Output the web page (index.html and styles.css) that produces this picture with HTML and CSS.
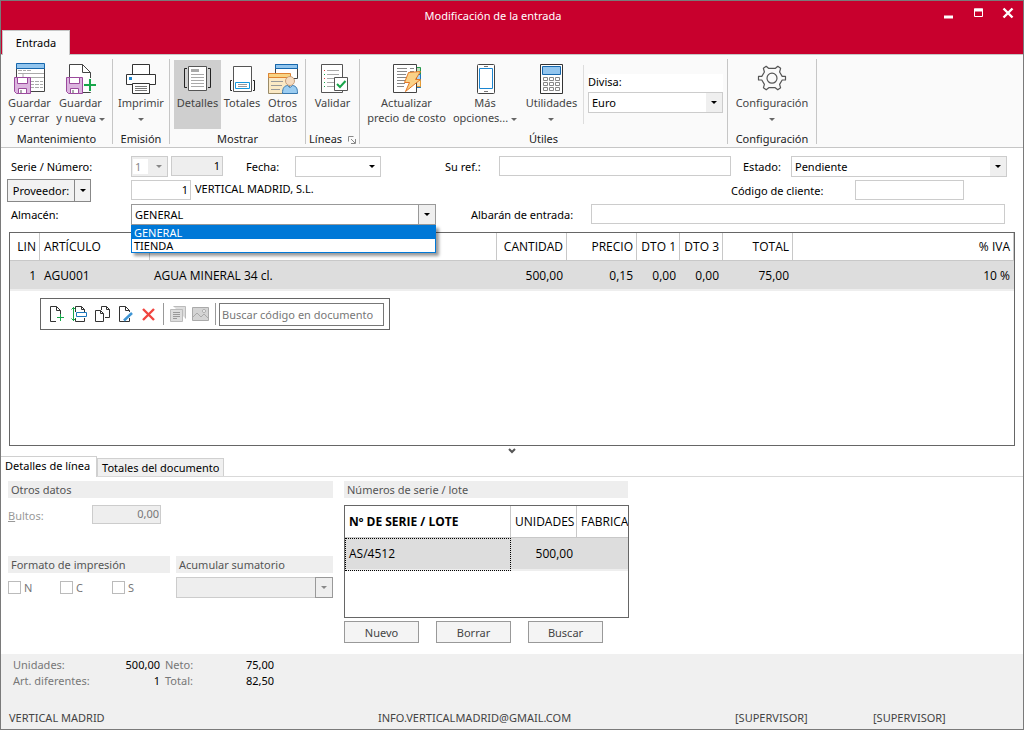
FILE: index.html
```html
<!DOCTYPE html>
<html lang="es">
<head>
<meta charset="utf-8">
<title>Modificación de la entrada</title>
<link rel="stylesheet" href="styles.css">
</head>
<body>
<div class="window">
  <header class="titlebar">
    <div class="title-row">
      <h1 class="title">Modificación de la entrada</h1>
      <div class="controls">
        <button class="control" type="button" aria-label="Minimizar"><svg width="12" height="12"><path d="M2 10h9" stroke="#fff" stroke-width="3"/></svg></button>
        <button class="control" type="button" aria-label="Maximizar"><svg width="12" height="12"><path d="M2.500 2h8v7.500h-8z" fill="none" stroke="#fff"/><path d="M2 3h9" stroke="#fff" stroke-width="3"/></svg></button>
        <button class="control" type="button" aria-label="Cerrar"><svg width="12" height="12"><path d="M1.500 1.500l9 9M10.500 1.500l-9 9" stroke="#fff" stroke-width="2.400"/></svg></button>
      </div>
    </div>
    <div class="ribbon-tabs"><button class="ribbon-tab" type="button">Entrada</button></div>
  </header>

  <nav class="ribbon">
    <section class="group g-save">
      <div class="group-items">
        <button class="tool" type="button">
          <svg width="32" height="32" viewBox="0 0 32 32"><path d="M2.500 6v23.500h28V6" fill="#fff" stroke="#444"/><path d="M2.500 1.500h28v5h-28z" fill="#92c5ee" stroke="#1667ad"/><path d="M4 8.500h4m1 0h3m1 0h4M4 11.500h26M9 11v4.500h21M15 19.500h14M15 22.500h14M15 25.500h14" stroke="#aaa" fill="none"/><path d="M15 19.500h14M15 22.500h14M15 25.500h14" stroke="#fff" stroke-dasharray="1 4"/><path d="M.5 15.500h16v16h-14l-2-2z" fill="#dcb5df" stroke="#9b4a9d"/><path d="M3.500 15.500h10v6h-10z" fill="#fff" stroke="#9b4a9d"/><path d="M4.500 26.500h8v5h-8z" fill="#fff" stroke="#9b4a9d"/><path d="M7 28v3" stroke="#555"/></svg>
          <span>Guardar<br>y cerrar</span>
        </button>
        <button class="tool" type="button">
          <svg width="32" height="32" viewBox="0 0 32 32"><path d="M4.500 2.500h13l8 8v20h-21z" fill="#fff" stroke="#444"/><path d="M17.500 2.500v8h8" fill="none" stroke="#444"/><path d="M1.500 15.500h16v16h-14l-2-2z" fill="#dcb5df" stroke="#9b4a9d"/><path d="M4.500 15.500h10v6h-10z" fill="#fff" stroke="#9b4a9d"/><path d="M5.500 26.500h8v5h-8z" fill="#fff" stroke="#9b4a9d"/><path d="M8 28v3" stroke="#555"/><path d="M25 16v14M18 23h14" stroke="#fafafa" stroke-width="4"/><path d="M25 17v12M19 23h12" stroke="#18a64a" stroke-width="2"/></svg>
          <span>Guardar<br>y nueva <i class="caret"></i></span>
        </button>
      </div>
      <h2 class="group-name">Mantenimiento</h2>
    </section>
    <section class="group g-print">
      <div class="group-items">
        <button class="tool" type="button">
          <svg width="32" height="32" viewBox="0 0 32 32" fill="#fff" stroke="#333"><path d="M7.500 12.500v-10h17v10M1.500 12.500h29v10h-29z"/><path d="M7.500 21.500h17v10h-17z"/><path d="M10 24.500h12M10 26.500h12M10 28.500h12" stroke="#777"/><path d="M4 15h3v3h-3z" fill="#1c86d1" stroke="none"/></svg>
          <span>Imprimir<br><i class="caret"></i></span>
        </button>
      </div>
      <h2 class="group-name">Emisión</h2>
    </section>
    <section class="group g-show">
      <div class="group-items">
        <button class="tool active" type="button" aria-pressed="true">
          <svg width="32" height="32" viewBox="0 0 32 32" fill="none" stroke="#555"><path d="M6.500 4.500h18v24h-18z" fill="#fff"/><path d="M9 7h8v3H9z" fill="#aaa" stroke="none"/><path d="M9 12.500h13M9 15.500h13M9 18.500h13M9 21.500h13M9 24.500h13" stroke="#aaa"/><path d="M5 6.500h-2.500v19H5M26 6.500h2.500v19H26" stroke="#222"/></svg>
          <span>Detalles</span>
        </button>
        <button class="tool t-totals" type="button">
          <svg width="32" height="32" viewBox="0 0 32 32" fill="none" stroke="#555"><path d="M7.500 4.500h18v25h-18z" fill="#fff"/><path d="M9.500 20.500h14v6h-14z" stroke="#1597dd"/><path d="M12 22.500h9M12 24.500h9" stroke="#999"/><path d="M6 18.500H4.500v10H6M27 18.500h1.500v10H27" stroke="#222"/></svg>
          <span>Totales</span>
        </button>
        <button class="tool t-other" type="button">
          <svg width="32" height="32" viewBox="0 0 32 32"><path d="M8.500 2.500h22v14h-22z" fill="#fff" stroke="#444"/><path d="M8.500 2.500h22v4h-22z" fill="#92c5ee" stroke="#1667ad"/><path d="M1.500 11.500h21v20h-21z" fill="#fbe9c4" stroke="#9a8b68"/><path d="M1.500 11.500h22v4h-22z" fill="#f8d383" stroke="#df8432"/><path d="M4 19.500h12M4 23.500h11M4 27.500h9" stroke="#999"/><circle cx="23" cy="19" r="4.500" fill="#f5dcc1" stroke="#c8a07c"/><path d="M15.500 31.500c0-6 2-7.500 5-8l2.500 2 2.500-2c4 .5 5 3 5 8z" fill="#9ccdf1" stroke="#3878ae"/></svg>
          <span>Otros<br>datos</span>
        </button>
      </div>
      <h2 class="group-name">Mostrar</h2>
    </section>
    <section class="group g-lines">
      <div class="group-items">
        <button class="tool" type="button">
          <svg width="32" height="32" viewBox="0 0 32 32" fill="none"><path d="M4.500 2.500h21v28h-21z" fill="#fff" stroke="#555"/><path d="M10 8.500h12M10 12.500h12M10 16.500h8M10 20.500h7M10 24.500h7" stroke="#aaa"/><path d="M7.500 8v18" stroke="#18a64a" stroke-dasharray="1 3"/><path d="M7.500 8v1M7.500 16v1" stroke="#d44"/><path d="M17.500 15.500h13v13h-13z" fill="#fff" stroke="#555"/><path d="M20 22l3 3 5.500-6" stroke="#18a64a" stroke-width="2"/></svg>
          <span>Validar</span>
        </button>
      </div>
      <h2 class="group-name">Líneas <button class="launcher" type="button" aria-label="Más opciones de líneas"><svg width="8" height="8" fill="none" stroke="#888"><path d="M.5 5.500v-5h5M3 3l4 4M7.500 3v4.500H3"/></svg></button></h2>
    </section>
    <section class="group g-utils">
      <div class="group-items">
        <button class="tool t-wide" type="button">
          <svg width="32" height="32" viewBox="0 0 32 32"><path d="M20 5.500h9.500v20H20z" fill="#b9e0b8" stroke="#23974a"/><path d="M20 12.500h9.500v13H20z" fill="#a9d1f2" stroke="#1c76bd"/><path d="M20 18.500h9.500v6H20z" fill="#fbe3b0" stroke="#e69a35"/><path d="M2.500 2.500h23v28h-23z" fill="#fff" stroke="#444"/><path d="M6 6.500h10M6 9.500h10M6 12.500h9M6 15.500h9M6 18.500h8M6 21.500h8M6 24.500h7M19 6.500h4M19 9.500h4" stroke="#888"/><path d="M17.500 10.500l12-1-5 8h5l-15 12 4-9h-5z" fill="#fad187" stroke="#e47825"/></svg>
          <span>Actualizar<br>precio de costo</span>
        </button>
        <button class="tool t-more" type="button">
          <svg width="32" height="32" viewBox="0 0 32 32" fill="#fff"><rect x="8.500" y="2.500" width="17" height="29" rx="1" stroke="#444"/><path d="M10.500 6.500h13v20h-13z" stroke="#1c86d1"/><path d="M15 4.500h4M15 29.500h4" stroke="#777"/></svg>
          <span>Más<br>opciones... <i class="caret"></i></span>
        </button>
        <button class="tool t-tools" type="button">
          <svg width="32" height="32" viewBox="0 0 32 32" fill="#fff"><path d="M4.500 2.500h22v29h-22z" stroke="#333"/><path d="M6.500 4.500h18v8h-18z" fill="#92c5ee" stroke="#1667ad"/><path d="M7.500 15.500h4v3h-4zM13.500 15.500h4v3h-4zM19.500 15.500h4v3h-4zM7.500 20.500h4v3h-4zM13.500 20.500h4v3h-4zM19.500 20.500h4v3h-4zM7.500 25.500h4v3h-4zM13.500 25.500h4v3h-4zM19.500 25.500h4v3h-4z" stroke="#888"/></svg>
          <span>Utilidades<br><i class="caret"></i></span>
        </button>
        <div class="currency">
          <label for="divisa">Divisa:</label>
          <span class="combo shaded"><select id="divisa"><option>Euro</option></select></span>
        </div>
      </div>
      <h2 class="group-name">Útiles</h2>
    </section>
    <section class="group g-config">
      <div class="group-items">
        <button class="tool" type="button">
          <svg width="32" height="32" viewBox="0 0 32 32" fill="none" stroke="#555" stroke-width="1.200"><path d="M12.500 6.300L10.200 4.300l-2.800 2 1 3.700-2.600 4.400H2.500v3.600h3.300l2.600 4.400-1 3.400 2.800 2 2.600-2.100h6.400l2.600 2.100 2.800-2-1-3.400 2.600-4.400h3.300v-3.600h-3.300L23.600 10l1-3.700-2.800-2-2.300 2z" stroke-linejoin="round"/><circle cx="16" cy="16.200" r="5"/></svg>
          <span>Configuración<br><i class="caret"></i></span>
        </button>
      </div>
      <h2 class="group-name">Configuración</h2>
    </section>
  </nav>

  <main>
    <form class="form">
      <div class="row">
        <label class="lead" for="serie">Serie / Número:</label>
        <span class="combo off w-serie"><select id="serie" disabled><option>1</option></select></span>
        <input class="field num off w-numero" aria-label="Número" value="1" readonly>
        <label class="l-fecha" for="fecha">Fecha:</label>
        <span class="combo w-fecha"><select id="fecha"><option></option></select></span>
        <label class="l-ref" for="ref">Su ref.:</label>
        <input class="field w-ref" id="ref">
        <label class="l-estado" for="estado">Estado:</label>
        <span class="combo shaded grow"><select id="estado"><option>Pendiente</option></select></span>
      </div>
      <div class="row">
        <div class="lead-split"><div class="split"><button type="button">Proveedor:</button><button class="split-arrow" type="button" aria-label="Elegir"></button></div></div>
        <input class="field num w-prov" aria-label="Proveedor" value="1">
        <span class="prov-name">VERTICAL MADRID, S.L.</span>
        <label class="l-cliente" for="cliente">Código de cliente:</label>
        <input class="field w-cliente" id="cliente">
      </div>
      <div class="row">
        <label class="lead" for="almacen">Almacén:</label>
        <span class="combo open w-almacen"><select id="almacen"><option>GENERAL</option><option>TIENDA</option></select>
          <ul class="options"><li class="chosen">GENERAL</li><li>TIENDA</li></ul>
        </span>
        <label class="l-albaran" for="albaran">Albarán de entrada:</label>
        <input class="field grow w-albaran" id="albaran">
      </div>
    </form>

    <div class="lines">
      <table class="grid">
        <colgroup><col class="c-lin"><col class="c-art"><col class="c-desc"><col class="c-num"><col class="c-num"><col class="c-dto"><col class="c-dto"><col class="c-num"><col></colgroup>
        <thead><tr><th class="r">LIN</th><th>ARTÍCULO</th><th></th><th class="r">CANTIDAD</th><th class="r">PRECIO</th><th class="r">DTO 1</th><th class="r">DTO 3</th><th class="r">TOTAL</th><th class="r">% IVA</th></tr></thead>
        <tbody><tr><td class="r">1</td><td>AGU001</td><td>AGUA MINERAL 34 cl.</td><td class="r">500,00</td><td class="r">0,15</td><td class="r">0,00</td><td class="r">0,00</td><td class="r">75,00</td><td class="r">10 %</td></tr></tbody>
      </table>
      <div class="toolbar">
        <button type="button" aria-label="Nueva línea"><svg width="17" height="18" fill="none" stroke="#333"><path d="M8 16.500H2.500v-15h6l4 4V9M8.500 1.500v4h4"/><path d="M12.500 9v7M9 12.500h7" stroke="#18a64a"/></svg></button>
        <button type="button" aria-label="Insertar línea"><svg width="17" height="18" fill="none" stroke="#333"><path d="M4.500 7V1.500h6l3 3V7M10.500 1.500v3h3M4.500 13v3.500h9V13"/><path d="M5.500 7.500h10v4h-10z" stroke="#1c76bd"/><path d="M2.500 2v14M.5 4.500l2-2 2 2M.5 13.500l2 2 2-2" stroke="#18a64a"/></svg></button>
        <button type="button" aria-label="Duplicar línea"><svg width="17" height="18" fill="none" stroke="#333"><path d="M7.500 5V1.500h5l3 3v8H11M12.500 1.500v3h3"/><path d="M1.500 5.500h5l3 3v8h-8zM6.500 5.500v3h3"/></svg></button>
        <button type="button" aria-label="Modificar línea"><svg width="17" height="18" fill="none" stroke="#333"><path d="M12.500 13v3.500h-10v-15h6l4 4V7M8.500 1.500v4h4"/><path d="M7 15.500l8-7.500" stroke="#3f95d4" stroke-width="2.500"/></svg></button>
        <button type="button" aria-label="Borrar línea"><svg width="17" height="18"><path d="M3 4l11 11M14 4L3 15" stroke="#f04540" stroke-width="2.400"/></svg></button>
        <i class="bar"></i>
        <button type="button" aria-label="Notas" disabled><svg width="17" height="18" fill="#ddd" stroke="#bbb"><path d="M4.500 1.500h12v12"/><path d="M1.500 4.500h12v12h-12z"/><path d="M4 7.500h7M4 9.500h7M4 11.500h7M4 13.500h4" stroke="#999"/></svg></button>
        <button type="button" aria-label="Imagen" disabled><svg width="17" height="18" fill="#d4d4d4" stroke="#aaa"><path d="M.5 2.500h16v13H.5z"/><path d="M1 12l4-4 4 4 3-3 4 4" fill="none"/><circle cx="12" cy="6" r="1.500" fill="#fff"/></svg></button>
        <i class="bar"></i>
        <input class="search" aria-label="Buscar" placeholder="Buscar código en documento">
      </div>
    </div>
    <button class="collapse" type="button" aria-label="Plegar detalles"><svg width="8" height="6"><path d="M1 1l3 3 3-3" fill="none" stroke="#555" stroke-width="2"/></svg></button>

    <div class="tabs" role="tablist">
      <button class="tab on" type="button" role="tab" aria-selected="true">Detalles de línea</button>
      <button class="tab" type="button" role="tab" aria-selected="false">Totales del documento</button>
    </div>

    <div class="details">
      <div class="left">
        <h3 class="strip">Otros datos</h3>
        <div class="bultos"><label for="bultos"><u>B</u>ultos:</label><input class="field num" id="bultos" value="0,00" disabled></div>
        <div class="pair">
          <div class="format">
            <h3 class="strip">Formato de impresión</h3>
            <div class="checks">
              <label><input type="checkbox" disabled>N</label>
              <label><input type="checkbox" disabled>C</label>
              <label><input type="checkbox" disabled>S</label>
            </div>
          </div>
          <div class="sum">
            <h3 class="strip">Acumular sumatorio</h3>
            <span class="combo off boxed"><select aria-label="Acumular sumatorio" disabled><option></option></select></span>
          </div>
        </div>
      </div>
      <div class="right">
        <h3 class="strip">Números de serie / lote</h3>
        <div class="lots">
          <table class="grid lot-grid">
            <colgroup><col class="c-lot"><col class="c-units"><col></colgroup>
            <thead><tr><th class="bold">Nº DE SERIE / LOTE</th><th class="r">UNIDADES</th><th>FABRICA</th></tr></thead>
            <tbody><tr><td class="focus">AS/4512</td><td class="r">500,00</td><td></td></tr></tbody>
          </table>
        </div>
        <div class="actions"><button type="button">Nuevo</button><button type="button">Borrar</button><button type="button">Buscar</button></div>
      </div>
    </div>
  </main>

  <footer class="footer">
    <dl class="totals"><dt>Unidades:</dt><dd>500,00</dd><dt>Neto:</dt><dd>75,00</dd><dt>Art. diferentes:</dt><dd>1</dd><dt>Total:</dt><dd>82,50</dd></dl>
    <div class="status"><span>VERTICAL MADRID</span><span>INFO.VERTICALMADRID@GMAIL.COM</span><span>[SUPERVISOR]</span><span>[SUPERVISOR]</span></div>
  </footer>
</div>
</body>
</html>
```

FILE: styles.css
```css
* { box-sizing: border-box; }
body { margin: 0; font: 11px/15px "Noto Sans", "Open Sans", sans-serif; color: #000; }
button, input, select { font: inherit; color: inherit; margin: 0; padding: 0; border-radius: 0; }
button { border: 0; background: none; }
h1, h2, h3, dl, dd, ul { margin: 0; padding: 0; font: inherit; }
svg { display: block; flex: none; }

.window { display: flex; flex-direction: column; min-height: 100vh; border: 1px solid #7a7a7a; background: #fff; }

.titlebar { background: #c8002d; color: #fff; }
.title-row { display: flex; height: 29px; align-items: center; }
.title { flex: 1; padding-left: 43px; text-align: center; }
.controls { display: flex; gap: 18px; padding-right: 9px; padding-bottom: 6px; }
.control { display: block; }
.ribbon-tabs { display: flex; padding-left: 1px; }
.ribbon-tab { height: 25px; width: 68px; margin-bottom: -1px; padding-bottom: 2px; position: relative; background: #fafafa; color: #000; border: 1px solid #c6c6c6; border-bottom: 0; }

.ribbon { display: flex; padding: 4px 0 3px; height: 94px; background: #fafafa; border-top: 1px solid #c6c6c6; border-bottom: 1px solid #c6c6c6; }
.group { display: flex; flex-direction: column; border-right: 1px solid #c6c6c6; }
.group-items { display: flex; flex: 1; justify-content: center; padding-top: 1px; }
.group-name { height: 15px; text-align: center; color: #222; line-height: 20px; }
.g-save { width: 112px; }
.g-print { width: 57px; }
.g-show { width: 136px; }
.g-lines { width: 54px; }
.g-utils { width: 368px; }
.g-config { width: 89px; }
.g-save .group-items, .g-show .group-items, .g-utils .group-items { justify-content: flex-start; padding-left: 3px; }
.tool { display: flex; flex-direction: column; align-items: center; gap: 1px; height: 69px; padding-top: 2px; color: #444; white-space: nowrap; }
.g-save .tool { width: 51px; }
.tool.active { width: 47px; margin-left: 1px; background: #cfcfcf; }
.t-totals { width: 42px; }
.t-other { width: 39px; }
.t-wide { width: 87px; }
.t-more { width: 70px; }
.t-tools { width: 63px; }
.caret { display: inline-block; border: 3px solid transparent; border-top-color: #666; border-bottom: 0; vertical-align: middle; }
.launcher { display: inline-block; vertical-align: middle; margin-left: 3px; }
.currency { display: flex; flex-direction: column; width: 140px; height: 59px; margin-top: 5px; padding: 9px 0 0 4px; border-left: 1px solid #ddd; }
.currency label { height: 18px; background: #fff; }

.combo { position: relative; display: block; height: 21px; }
.combo select { appearance: none; display: block; width: 100%; height: 100%; padding: 0 20px 0 3px; border: 1px solid #ccc; background: #fff; opacity: 1; }
.combo::before { content: ""; position: absolute; right: 1px; top: 1px; bottom: 1px; width: 16px; pointer-events: none; }
.combo::after { content: ""; position: absolute; right: 6px; top: 9px; border: 3px solid transparent; border-top-color: #000; border-bottom: 0; pointer-events: none; }
.shaded::before, .open::before { background: #efefef; }
.off select { background: #eee; color: #888; }
.w-serie select { background: linear-gradient(#fff, #fff) 1px 2px / 15px 15px no-repeat #eee; }
.off::after { border-top-color: #888; }
.open select { border-color: #999; }
.open::before { border-left: 1px solid #999; }
.boxed::before { right: 0; top: 0; bottom: 0; border: 1px solid #999; }
.options { position: absolute; z-index: 1; left: 0; right: 0; top: 21px; list-style: none; background: #fff; border: 1px solid #0078d7; box-shadow: 3px 3px 3px #0006; line-height: 13px; }
.options li { padding-left: 2px; }
.options .chosen { background: #0078d7; color: #fff; }

.form { padding: 6px 16px 6px 10px; }
.row { display: flex; align-items: center; height: 24px; white-space: nowrap; }
.field { height: 20px; padding: 0 3px; border: 1px solid #ccc; background: #fff; }
.num { text-align: right; padding: 0 2px 2px; }
.field.off { background: #eee; }
.grow { flex: 1; min-width: 0; }
.lead, .lead-split { width: 120px; }
.w-serie { width: 37px; margin-right: 3px; }
.w-numero { width: 52px; }
.l-fecha { width: 72px; padding-left: 23px; }
.w-fecha { width: 86px; }
.l-ref { width: 118px; padding-left: 64px; }
.w-ref { width: 232px; }
.l-estado { width: 60px; padding-left: 12px; }
.split { display: flex; width: 84px; height: 23px; margin-left: -4px; border: 1px solid #888; background: #f2f2f2; }
.split button { flex: 1; }
.split .split-arrow { flex: none; width: 16px; border-left: 1px solid #888; }
.split-arrow::before { content: ""; display: block; width: 0; margin: 0 auto; border: 3px solid transparent; border-top-color: #000; border-bottom: 0; }
.w-prov { width: 60px; }
.prov-name { width: 540px; padding: 0 0 3px 4px; }
.l-cliente { width: 124px; }
.w-cliente { width: 109px; }
.w-almacen { width: 305px; }
.l-albaran { width: 155px; padding-left: 35px; }
.w-albaran { margin-right: 2px; }

.lines { height: 214px; margin: 0 8px; border: 1px solid #666; }
.grid { width: 100%; table-layout: fixed; border-collapse: separate; border-spacing: 0; font: 12px/16px "Open Sans", "Noto Sans", sans-serif; white-space: nowrap; }
.grid th { height: 28px; padding: 0 4px; border-right: 1px solid #c8c8c8; border-bottom: 1px solid #c8c8c8; font-weight: 400; text-align: left; }
.grid td { height: 30px; padding: 1px 4px 0; background: #ddd; border-bottom: 2px solid #eee; }
.grid .r { text-align: right; }
.grid th.r { padding-right: 3px; }
.grid .bold { font-weight: 700; }
.c-lin { width: 30px; }
.c-art { width: 110px; }
.c-desc { width: 347px; }
.c-num { width: 70px; }
.c-dto { width: 43px; }

.toolbar { display: flex; align-items: center; gap: 6px; width: max-content; height: 32px; margin: 7px 0 0 30px; padding: 0 5px 0 7px; border: 1px solid #666; }
.bar { width: 1px; height: 22px; margin-right: -1px; background: #999; }
.search { width: 165px; height: 23px; margin-left: -2px; padding: 0 2px; border: 1px solid #777; }
.search::placeholder { color: #777; }
.collapse { display: block; height: 10px; margin: 0 auto; }

.tabs { display: flex; align-items: flex-end; height: 21px; border-bottom: 1px solid #d9d9d9; }
.tab { height: 18px; padding: 0 4px; border: 1px solid #d0d0d0; border-bottom: 0; background: #f0f0f0; }
.tab.on { height: 21px; margin-bottom: -1px; background: #fff; border-left: 0; padding: 0 6px 4px 4px; position: relative; }
.details { display: flex; gap: 11px; padding: 4px 7px 11px; }
.left { width: 325px; color: #777; }
.strip { height: 17px; padding-left: 3px; line-height: 17px; background: #eee; color: #555; }
.bultos { display: flex; height: 19px; margin: 7px 0 32px; color: #999; }
.bultos label { width: 84px; padding-top: 3px; }
.bultos .field { width: 69px; height: 19px; padding-right: 1px; background: #eee; color: #777; }
.pair { display: flex; gap: 6px; }
.format { width: 162px; }
.sum { width: 157px; }
.sum .combo { margin-top: 4px; }
.checks { display: flex; margin-top: 7px; }
.checks label { display: flex; align-items: center; gap: 3px; width: 52px; }
.checks input { appearance: none; width: 13px; height: 13px; border: 1px solid #bbb; background: #fff; }
.right { width: 285px; }
.right .strip { margin-right: 1px; }
.lots { height: 113px; margin-top: 7px; border: 1px solid #666; overflow: hidden; }
.c-lot { width: 166px; }
.c-units { width: 66px; }
.lot-grid th { height: 32px; }
.lot-grid th:last-child { border-right: 0; }
.lot-grid td { height: 33px; }
.lot-grid .focus { outline: 1px dotted #000; outline-offset: -1px; }
.actions { display: flex; gap: 17px; margin-top: 3px; }
.actions button { width: 75px; height: 22px; border: 1px solid #999; background: #f4f4f4; color: #444; }

.footer { display: flex; flex: 1; flex-direction: column; justify-content: space-between; padding: 3px 8px 4px; background: #f0f0f0; }
.totals { display: grid; grid-template-columns: 97px 50px 65px 49px; row-gap: 1px; margin-left: 4px; color: #777; }
.totals dd { text-align: right; color: #000; }
.totals dt:nth-of-type(even) { padding-left: 5px; }
.status { display: grid; grid-template-columns: 369fr 357fr 138fr 142fr; color: #444; }
```
